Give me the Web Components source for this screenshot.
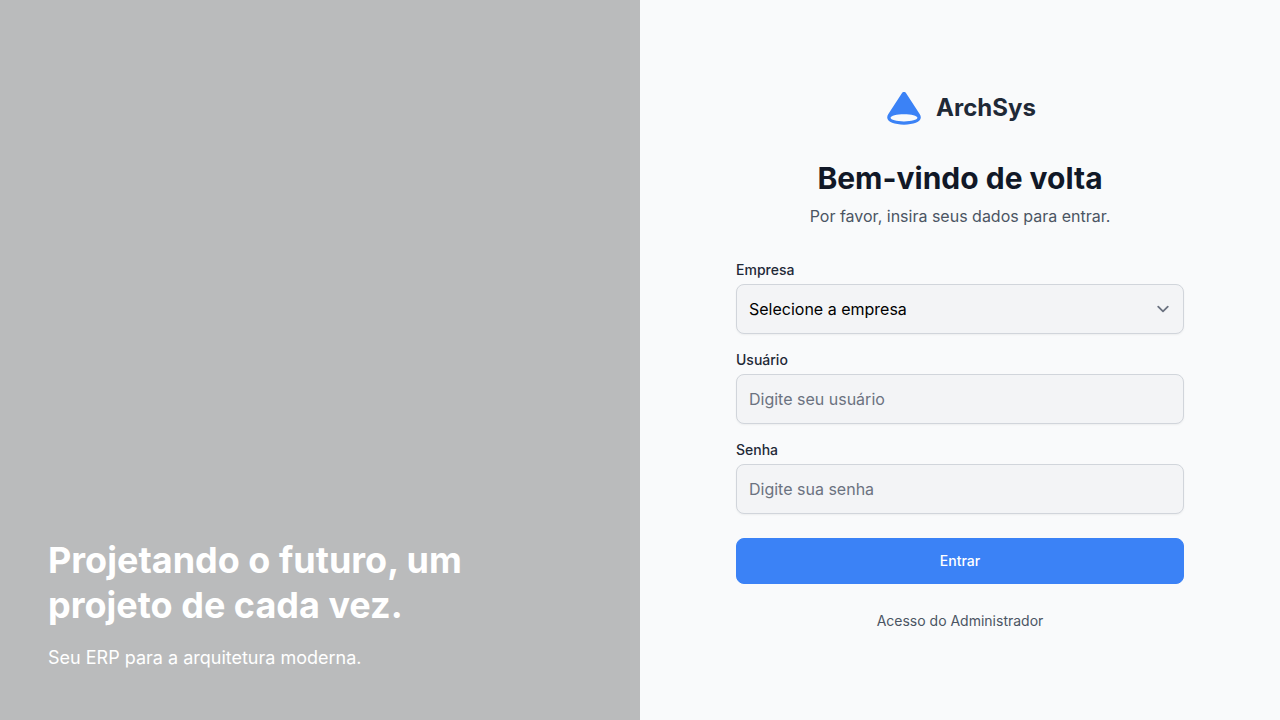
<!DOCTYPE html>
<html lang="pt-BR">
<head>
<meta charset="utf-8">
<meta name="viewport" content="width=device-width, initial-scale=1">
<title>ArchSys</title>
<style>
  body { margin: 0; font-family: Inter, "Liberation Sans", sans-serif; font-size: 16px; line-height: 24px; background: #f9fafb; }
</style>
</head>
<body>
<arch-login-page>
  <arch-hero slot="hero">
    <span slot="title">Projetando o futuro, um projeto de cada vez.</span>
    <span slot="text">Seu ERP para a arquitetura moderna.</span>
  </arch-hero>
  <arch-logo slot="main">ArchSys</arch-logo>
  <arch-heading slot="main">
    <span slot="title">Bem-vindo de volta</span>
    <span slot="text">Por favor, insira seus dados para entrar.</span>
  </arch-heading>
  <arch-login-form slot="main"></arch-login-form>
  <arch-link slot="main" href="#admin">Acesso do Administrador</arch-link>
</arch-login-page>

<script>
const define = (name, html, setup) => {
  const template = document.createElement('template');
  template.innerHTML = html;
  customElements.define(name, class extends HTMLElement {
    constructor() {
      super();
      this.attachShadow({ mode: 'open' }).append(template.content.cloneNode(true));
    }
    connectedCallback() {
      if (setup) setup(this, this.shadowRoot);
    }
  });
};

define('arch-login-page', `
  <style>
    :host { display: grid; grid-template-columns: 1fr 1fr; min-height: 100vh; }
    main { display: flex; flex-direction: column; justify-content: center; box-sizing: border-box; padding: 48px 96px; }
    .column { display: flex; flex-direction: column; width: 100%; max-width: 448px; margin: 0 auto; }
    @media (max-width: 900px) {
      :host { grid-template-columns: 1fr; }
      slot[name="hero"] { display: none; }
      main { padding: 48px 24px; }
    }
  </style>
  <slot name="hero"></slot>
  <main><div class="column"><slot name="main"></slot></div></main>
`);

define('arch-hero', `
  <style>
    :host { display: flex; flex-direction: column; justify-content: flex-end; box-sizing: border-box; padding: 48px; color: #fff; background: #babbbc; }
    h2 { margin: 0; max-width: 512px; font-size: 36px; line-height: 45px; font-weight: 700; }
    p { margin: 16px 0 0; font-size: 18px; line-height: 28px; }
  </style>
  <h2><slot name="title"></slot></h2>
  <p><slot name="text"></slot></p>
`);

define('arch-logo', `
  <style>
    :host { display: flex; align-items: center; justify-content: center; gap: 12px; margin-bottom: 32px; color: #1f2937; font-size: 24px; line-height: 32px; font-weight: 700; }
    svg { width: 40px; height: 40px; fill: #3b82f6; }
  </style>
  <svg viewBox="0 0 40 40" aria-hidden="true">
    <path fill-rule="evenodd" d="M17.7 5.4C18.8 3.6 21.2 3.6 22.3 5.4L35.8 26.2C36.4 27.2 36.8 28.4 36.8 29.6C36.8 34 29.3 36.7 20 36.7S3.2 34 3.2 29.6C3.2 28.4 3.6 27.2 4.2 26.2ZM20 26.2C12.6 26.2 6.6 27.8 6.6 29.8S12.6 33.4 20 33.4S33.4 31.8 33.4 29.8S27.4 26.2 20 26.2Z"/>
  </svg>
  <span><slot></slot></span>
`);

define('arch-heading', `
  <style>
    :host { display: block; margin-bottom: 32px; text-align: center; }
    h1 { margin: 0; color: #111827; font-size: 30px; line-height: 36px; font-weight: 700; }
    p { margin: 8px 0 0; color: #4b5563; }
  </style>
  <h1><slot name="title"></slot></h1>
  <p><slot name="text"></slot></p>
`);

define('arch-login-form', `
  <style>
    :host { display: block; }
    form { display: flex; flex-direction: column; gap: 24px; margin: 0; }
    .fields { display: flex; flex-direction: column; gap: 16px; }
    .field { display: flex; flex-direction: column; gap: 4px; }
    label { color: #1f2937; font-size: 14px; line-height: 20px; font-weight: 500; }
    input, select { box-sizing: border-box; width: 100%; height: 50px; margin: 0; padding: 12px; border: 1px solid #d1d5db; border-radius: 8px; background-color: #f3f4f6; color: #000; font: inherit; box-shadow: 0 1px 2px rgba(0, 0, 0, 0.05); }
    input::placeholder { color: #6b7280; opacity: 1; }
    select { appearance: none; padding-right: 40px; background-image: url("data:image/svg+xml,%3Csvg xmlns='http://www.w3.org/2000/svg' fill='none' viewBox='0 0 20 20'%3E%3Cpath stroke='%236b7280' stroke-linecap='round' stroke-linejoin='round' stroke-width='1.5' d='M6 8l4 4 4-4'/%3E%3C/svg%3E"); background-repeat: no-repeat; background-position: right 8px center; background-size: 24px 24px; }
    input:focus, select:focus { outline: 2px solid #3b82f6; }
    button { padding: 12px 16px; border: 1px solid #3b82f6; border-radius: 8px; background: #3b82f6; color: #fff; font: inherit; font-size: 14px; line-height: 20px; font-weight: 500; cursor: pointer; }
    button:hover { background: #2563eb; border-color: #2563eb; }
  </style>
  <form>
    <div class="fields">
      <div class="field">
        <label for="empresa">Empresa</label>
        <select id="empresa" name="empresa"><option value="">Selecione a empresa</option></select>
      </div>
      <div class="field">
        <label for="usuario">Usuário</label>
        <input id="usuario" name="usuario" type="text" placeholder="Digite seu usuário">
      </div>
      <div class="field">
        <label for="senha">Senha</label>
        <input id="senha" name="senha" type="password" placeholder="Digite sua senha">
      </div>
    </div>
    <button type="submit">Entrar</button>
  </form>
`, (host, root) => {
  root.querySelector('form').addEventListener('submit', event => event.preventDefault());
});

define('arch-link', `
  <style>
    :host { display: block; margin-top: 24px; text-align: center; }
    a { color: #4b5563; font-size: 14px; text-decoration: none; }
    a:hover { color: #3b82f6; }
  </style>
  <a><slot></slot></a>
`, (host, root) => {
  root.querySelector('a').href = host.getAttribute('href');
});
</script>
</body>
</html>
